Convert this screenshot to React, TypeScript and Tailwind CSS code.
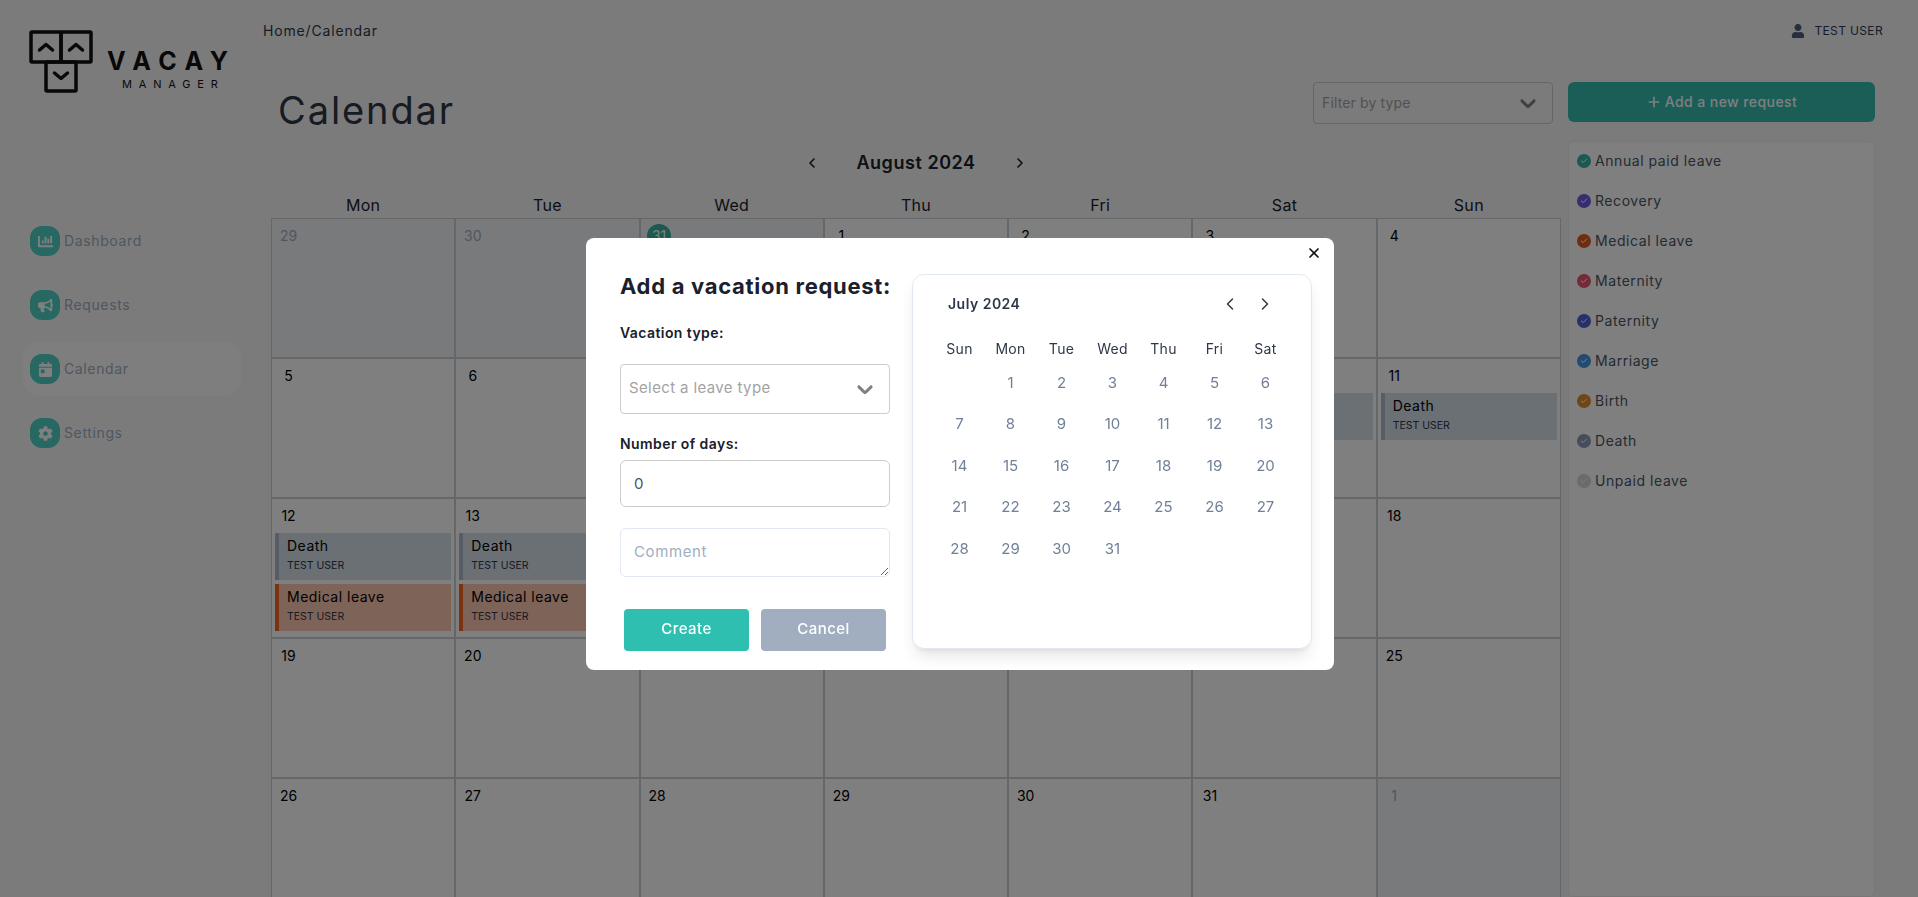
import { Check, ChevronLeft, ChevronRight, Plus, X } from "lucide-react";
import { FaBullhorn, FaCalendarDay, FaChartBar, FaCog, FaUser } from "react-icons/fa";

const navItems = [
  { label: "Dashboard", icon: FaChartBar, active: false },
  { label: "Requests", icon: FaBullhorn, active: false },
  { label: "Calendar", icon: FaCalendarDay, active: true },
  { label: "Settings", icon: FaCog, active: false },
];

const legend = [
  { label: "Annual paid leave", color: "bg-[#38b2a0]" },
  { label: "Recovery", color: "bg-[#6b5ce0]" },
  { label: "Medical leave", color: "bg-[#dd5b20]" },
  { label: "Maternity", color: "bg-[#e8546f]" },
  { label: "Paternity", color: "bg-[#4c62d8]" },
  { label: "Marriage", color: "bg-[#4299e1]" },
  { label: "Birth", color: "bg-[#dd8c2b]" },
  { label: "Death", color: "bg-[#8a9ab5]" },
  { label: "Unpaid leave", color: "bg-[#d4d6d8]" },
];

const days = [
  { n: "29", muted: true },
  { n: "30", muted: true },
  { n: "31", muted: true, today: true },
  { n: "1" },
  { n: "2" },
  { n: "3" },
  { n: "4" },
  { n: "5" },
  { n: "6" },
  { n: "7" },
  { n: "8" },
  { n: "9" },
  { n: "10", events: ["Death"] },
  { n: "11", events: ["Death"] },
  { n: "12", events: ["Death", "Medical leave"] },
  { n: "13", events: ["Death", "Medical leave"] },
  { n: "14" },
  { n: "15" },
  { n: "16" },
  { n: "17" },
  { n: "18" },
  { n: "19" },
  { n: "20" },
  { n: "21" },
  { n: "22" },
  { n: "23" },
  { n: "24" },
  { n: "25" },
  { n: "26" },
  { n: "27" },
  { n: "28" },
  { n: "29" },
  { n: "30" },
  { n: "31" },
  { n: "1", muted: true },
];

const weekDays = ["Mon", "Tue", "Wed", "Thu", "Fri", "Sat", "Sun"];
const pickerDays = ["Sun", "Mon", "Tue", "Wed", "Thu", "Fri", "Sat"];
const julyCells = ["", ...Array.from({ length: 31 }, (_, i) => String(i + 1))];

function SelectChevron() {
  return (
    <svg width="26" height="26" viewBox="0 0 20 20" fill="#808080" className="shrink-0">
      <path d="M4.516 7.548c0.436-0.446 1.043-0.481 1.576 0l3.908 3.747 3.908-3.747c0.533-0.481 1.141-0.446 1.574 0 0.436 0.445 0.408 1.197 0 1.615-0.406 0.418-4.695 4.502-4.695 4.502-0.217 0.223-0.502 0.335-0.787 0.335s-0.57-0.112-0.789-0.335c0 0-4.287-4.084-4.695-4.502s-0.436-1.17 0-1.615z" />
    </svg>
  );
}

function Logo() {
  return (
    <div className="flex items-start">
      <svg width="64" height="64" viewBox="0 0 64 64" fill="none" stroke="#111" className="shrink-0">
        <g strokeWidth="3.5" strokeLinejoin="round">
          <rect x="2" y="2" width="30" height="30" rx="1" />
          <rect x="32" y="2" width="30" height="30" rx="1" />
          <rect x="17" y="32" width="30" height="29" rx="1" />
        </g>
        <g strokeWidth="3.5" strokeLinecap="round" strokeLinejoin="round">
          <path d="M10.5 20l6.5-5.5 6.5 5.5" />
          <path d="M40.5 20l6.5-5.5 6.5 5.5" />
          <path d="M25.5 43l6.5 5.5 6.5-5.5" />
        </g>
      </svg>
      <div className="ml-[14px] mt-[19px] flex flex-col items-start">
        <span className="text-[25px] font-bold leading-[24px] tracking-[0.34em] text-[#111]">VACAY</span>
        <span className="ml-[15px] mt-[4px] text-[11px] font-normal leading-[14px] tracking-[0.62em] text-[#111]">
          MANAGER
        </span>
      </div>
    </div>
  );
}

function Sidebar() {
  return (
    <aside className="flex w-[263px] shrink-0 flex-col">
      <div className="h-[214px] pl-[29px] pt-[30px]">
        <Logo />
      </div>
      <nav className="ml-[23px] flex w-[218px] flex-col gap-[10px]">
        {navItems.map((item) => (
          <div
            key={item.label}
            className={`flex h-[54px] items-center gap-[4px] rounded-2xl px-[7px] ${item.active ? "bg-[#fdfdfd]" : ""}`}
          >
            <span className="flex h-[30px] w-[30px] items-center justify-center rounded-xl bg-[#4fd1c5] text-white">
              <item.icon className="h-[15px] w-[15px]" />
            </span>
            <span className="-mt-[1px] text-sm tracking-[0.045em] text-[#a0aec0]">{item.label}</span>
          </div>
        ))}
      </nav>
    </aside>
  );
}

function EventCard({ title }: { title: string }) {
  const medical = title === "Medical leave";
  return (
    <div
      className={`h-[47px] border-l-4 pl-[8px] pt-[2px] ${
        medical ? "border-[#f56420] bg-[#fdc6b0]" : "border-[#aebbcc] bg-[#d6e0e8]"
      }`}
    >
      <div className="text-sm leading-[22px] tracking-[0.035em] text-black">{title}</div>
      <div className="mt-[1px] text-[10.5px] leading-[16px] text-[#2d3748]">TEST USER</div>
    </div>
  );
}

function CalendarGrid() {
  return (
    <div className="min-w-0 flex-1 pl-[8px]">
      <div className="flex h-[44px] items-center justify-center gap-[36px]">
        <ChevronLeft className="h-4 w-4 text-[#1a202c]" strokeWidth={2.5} />
        <span className="text-lg font-semibold tracking-[0.03em] text-[#1a202c]">August 2024</span>
        <ChevronRight className="h-4 w-4 text-[#1a202c]" strokeWidth={2.5} />
      </div>
      <div className="grid h-[33px] grid-cols-7 pt-[8px]">
        {weekDays.map((d) => (
          <div key={d} className="text-center text-base leading-[24px] tracking-[0.02em] text-[#1a202c]">
            {d}
          </div>
        ))}
      </div>
      <div className="grid grid-cols-7 auto-rows-[140px]">
        {days.map((d, i) => (
          <div key={i} className={`border border-[#cdcfd1] px-[3px] ${d.muted ? "bg-[#f1f4f8]" : "bg-white"}`}>
            <div className="flex h-[33px] w-[26px] items-center justify-center pl-[1px]">
              {d.today ? (
                <span className="flex h-[24px] w-[24px] translate-x-[2px] items-center justify-center rounded-full bg-[#38b2a0] text-sm text-white">
                  {d.n}
                </span>
              ) : (
                <span className={`text-sm ${d.muted ? "text-[#a0aec0]" : "text-black"}`}>{d.n}</span>
              )}
            </div>
            <div className="mt-[1px] flex flex-col gap-[4px]">
              {d.events?.map((e) => (
                <EventCard key={e} title={e} />
              ))}
            </div>
          </div>
        ))}
      </div>
    </div>
  );
}

function Legend() {
  return (
    <div className="ml-[7px] w-[307px] shrink-0 rounded-md border border-[#eeeff1] bg-white pl-[8px]">
      {legend.map((l) => (
        <div key={l.label} className="flex h-[40px] items-center gap-[4px] pb-[2px]">
          <span className={`flex h-[14px] w-[14px] items-center justify-center rounded-full ${l.color}`}>
            <Check className="h-[8px] w-[8px] text-white" strokeWidth={3} />
          </span>
          <span className="text-sm tracking-[0.04em] text-[#4a5568]">{l.label}</span>
        </div>
      ))}
    </div>
  );
}

function DatePicker() {
  return (
    <div className="ml-[22px] mt-[36px] h-[375px] w-[400px] rounded-xl border border-[#e2e8f0] bg-white pt-[17px] shadow-lg">
      <div className="flex h-[24px] items-center justify-between pl-[35px] pr-[36px]">
        <span className="text-sm font-semibold tracking-[0.035em] text-[#2d3748]">July 2024</span>
        <div className="flex gap-[15px] text-[#2d3748]">
          <ChevronLeft className="h-5 w-5" strokeWidth={1.75} />
          <ChevronRight className="h-5 w-5" strokeWidth={1.75} />
        </div>
      </div>
      <div className="ml-[21px] mt-[21px] w-[357px]">
        <div className="grid h-[24px] grid-cols-7 items-center">
          {pickerDays.map((d) => (
            <div key={d} className="text-center text-sm tracking-[0.02em] text-[#2d3748]">
              {d}
            </div>
          ))}
        </div>
        <div className="mt-[1px] grid grid-cols-7 auto-rows-[41.5px] items-center">
          {julyCells.map((d, i) => (
            <div key={i} className="text-center text-[15px] text-[#718096]">
              {d}
            </div>
          ))}
        </div>
      </div>
    </div>
  );
}

function RequestModal() {
  return (
    <div className="fixed inset-0 flex items-center justify-center bg-black/50 pl-[2px] pt-[11px]">
      <div className="relative flex h-[432px] w-[748px] rounded-lg bg-white pl-[34px]">
        <button className="absolute right-[12px] top-[7px] text-[#111]">
          <X className="h-4 w-4" strokeWidth={2.5} />
        </button>
        <div className="w-[270px] shrink-0 pt-[34px]">
          <h2 className="h-[28px] whitespace-nowrap text-[22px] font-bold leading-[28px] tracking-[0.032em] text-[#1a202c]">
            Add a vacation request:
          </h2>
          <label className="mt-[23px] block h-[20px] text-sm font-semibold leading-[20px] tracking-[0.03em] text-[#1a202c]">
            Vacation type:
          </label>
          <div className="mt-[21px] flex h-[50px] items-center justify-between rounded border border-[#cccccc] pl-[8px] pr-[11px]">
            <span className="-mt-[1px] text-[15px] tracking-[0.025em] text-[#a3a3a3]">Select a leave type</span>
            <SelectChevron />
          </div>
          <label className="mt-[20px] block h-[20px] text-sm font-semibold leading-[20px] tracking-[0.03em] text-[#1a202c]">
            Number of days:
          </label>
          <input
            readOnly
            value="0"
            className="mt-[6px] block h-[47px] w-full rounded-md border border-[#cccccc] px-[13px] text-[15px] text-[#4a5568] outline-none"
          />
          <textarea
            readOnly
            placeholder="Comment"
            className="mt-[21px] block h-[49px] w-full rounded-md border border-[#e2e8f0] px-[13px] py-[12px] text-[15px] tracking-[0.04em] text-[#4a5568] outline-none placeholder:text-[#a0aec0]"
          />
          <div className="mt-[32px] flex gap-[12px] px-[4px]">
            <button className="h-[42px] w-[125px] rounded bg-[#2fbfb0] pb-[1px] text-[15px] font-medium tracking-[0.03em] text-white">
              Create
            </button>
            <button className="h-[42px] w-[125px] rounded bg-[#a0aec0] pb-[1px] text-[15px] font-medium tracking-[0.03em] text-white">
              Cancel
            </button>
          </div>
        </div>
        <DatePicker />
      </div>
    </div>
  );
}

export default function App() {
  return (
    <div className="flex h-screen overflow-hidden bg-[#f7f7f8] [font-family:Inter,sans-serif]">
      <Sidebar />
      <main className="flex min-w-0 flex-1 flex-col pr-[43px]">
        <div className="flex h-[62px] items-center justify-between">
          <span className="text-sm tracking-[0.06em] text-[#2d3748]">Home/Calendar</span>
          <div className="-mr-[8px] flex items-center gap-[9px]">
            <FaUser className="h-[14px] w-[14px] text-[#4a5f7a]" />
            <span className="text-xs tracking-[0.03em] text-[#2a3a55]">TEST USER</span>
          </div>
        </div>
        <div className="mt-[20px] flex h-[59px] shrink-0 items-start">
          <h1 className="flex-1 pl-[15px] text-[38px] font-normal leading-[56px] tracking-[0.05em] text-[#2d3748]">
            Calendar
          </h1>
          <div className="flex h-[42px] w-[240px] items-center justify-between rounded border border-[#cccccc] pl-[8px] pr-[11px]">
            <span className="text-sm tracking-[0.01em] text-[#a3a3a3]">Filter by type</span>
            <SelectChevron />
          </div>
          <button className="ml-[15px] flex h-[40px] w-[307px] items-center justify-center gap-[3px] rounded-md bg-[#34bdae] pb-[1px] text-sm font-medium tracking-[0.03em] text-white">
            <Plus className="h-4 w-4" strokeWidth={2.5} />
            Add a new request
          </button>
        </div>
        <div className="flex min-h-0 flex-1">
          <CalendarGrid />
          <Legend />
        </div>
      </main>
      <RequestModal />
    </div>
  );
}
